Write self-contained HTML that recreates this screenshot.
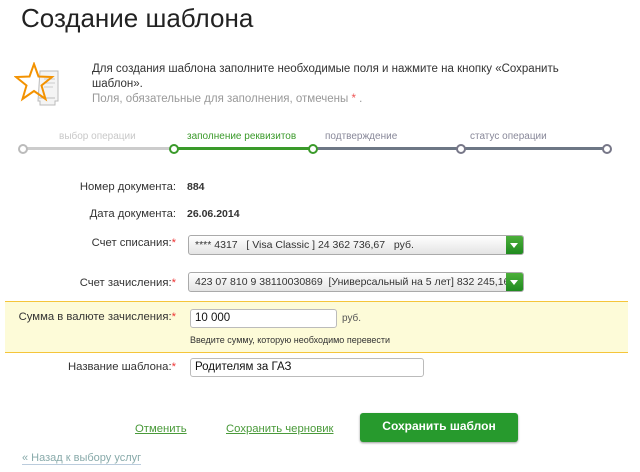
<!DOCTYPE html>
<html><head><meta charset="utf-8"><style>
body{margin:0;width:640px;height:472px;background:#fff;font-family:"Liberation Sans",sans-serif;position:relative;overflow:hidden;color:#333}
.a{position:absolute;white-space:nowrap}
.lbl{position:absolute;right:464px;font-size:11.3px;color:#333;white-space:nowrap}
.lbl i{color:#e33;font-style:normal}
.sel{position:absolute;left:188px;width:336px;height:20px;border:1px solid #aaa;border-radius:3px;background:linear-gradient(#fff,#e4e4e4);font-size:10.5px;line-height:19px;padding-left:6px;box-sizing:border-box;overflow:hidden;white-space:nowrap;color:#333}
.sel b{position:absolute;right:0;top:0;width:17px;height:18px;background:linear-gradient(#4caf3a,#1f8a1f)}
.sel b:after{content:"";position:absolute;left:4px;top:7px;border-left:4px solid transparent;border-right:4px solid transparent;border-top:5px solid #fff}
.inp{position:absolute;height:19px;border:1px solid #bbb;border-radius:3px;box-sizing:border-box;font-size:11.5px;line-height:17px;padding-left:4px;background:#fff;color:#111}
.dot{position:absolute;top:144px;width:6px;height:6px;border-radius:50%;border:2px solid #778;background:#fff}
</style></head><body>
<div class="a" style="left:21px;top:3px;font-size:26px;color:#222">Создание шаблона</div>
<svg class="a" style="left:14px;top:62px" width="48" height="44" viewBox="0 0 48 44">
<path d="M26 9h18v30h-3v4H26v-4h-2z" fill="#f4f4f4" stroke="#bbb"/>
<path d="M30 17h11M30 21h11M30 25h9" stroke="#ccc"/>
<path d="M25 36h16" stroke="#bbb"/>
<path d="M20 2l4.5 12.5 13.5 0.5-10.5 8.5 4 13.5-11.5-8-11.5 8 4-13.5-10.5-8.5 13.5-0.5z" fill="none" stroke="#f39200" stroke-width="2"/>
</svg>
<div class="a" style="left:92px;top:62px;font-size:11.5px;line-height:15px;color:#333;white-space:normal;width:500px">Для создания шаблона заполните необходимые поля и нажмите на кнопку «Сохранить шаблон».<br><span style="color:#999">Поля, обязательные для заполнения, отмечены <span style="color:#e55">*</span> .</span></div>
<div class="a" style="left:59px;top:131px;font-size:10px;color:#c8c8c8">выбор операции</div>
<div class="a" style="left:187px;top:131px;font-size:10px;color:#3a9a2a">заполнение реквизитов</div>
<div class="a" style="left:325px;top:131px;font-size:10px;color:#889">подтверждение</div>
<div class="a" style="left:470px;top:131px;font-size:10px;color:#889">статус операции</div>
<div class="a" style="left:22px;top:147px;width:152px;height:3px;background:#ccc"></div>
<div class="a" style="left:174px;top:147px;width:138px;height:3px;background:#3a9a2a"></div>
<div class="a" style="left:312px;top:147px;width:294px;height:3px;background:#6d7785"></div>
<div class="dot" style="left:18px;border-color:#bbb"></div>
<div class="dot" style="left:169px;border-color:#3a9a2a"></div>
<div class="dot" style="left:308px;border-color:#3a9a2a"></div>
<div class="dot" style="left:456px"></div>
<div class="dot" style="left:602px"></div>
<div class="lbl" style="top:181px">Номер документа:</div>
<div class="a" style="left:187px;top:181px;font-size:10.5px;font-weight:bold">884</div>
<div class="lbl" style="top:208px">Дата документа:</div>
<div class="a" style="left:187px;top:208px;font-size:10.5px;font-weight:bold">26.06.2014</div>
<div class="lbl" style="top:237px">Счет списания:<i>*</i></div>
<div class="sel" style="top:235px">**** 4317 &nbsp; [ Visa Classic ] 24 362 736,67 &nbsp; руб.<b></b></div>
<div class="lbl" style="top:277px">Счет зачисления:<i>*</i></div>
<div class="sel" style="top:272px">423 07 810 9 38110030869 &nbsp;[Универсальный на 5 лет] 832 245,16 &nbsp;руб.<b></b></div>
<div class="a" style="left:5px;top:301px;width:623px;height:50px;background:#fdfbd8;border-top:1px solid #f5c53a;border-bottom:1px solid #f5c53a"></div>
<div class="lbl" style="top:311px">Сумма в валюте зачисления:<i>*</i></div>
<div class="inp" style="left:190px;top:309px;width:147px">10 000</div>
<div class="a" style="left:342px;top:313px;font-size:10px;color:#555">руб.</div>
<div class="a" style="left:190px;top:335px;font-size:9px;color:#333">Введите сумму, которую необходимо перевести</div>
<div class="lbl" style="top:361px">Название шаблона:<i>*</i></div>
<div class="inp" style="left:190px;top:358px;width:234px">Родителям за ГАЗ</div>
<div class="a" style="left:135px;top:423px;font-size:11.3px;color:#4a9a3a;text-decoration:underline">Отменить</div>
<div class="a" style="left:226px;top:423px;font-size:11.3px;color:#4a9a3a;text-decoration:underline">Сохранить черновик</div>
<div class="a" style="left:360px;top:413px;width:158px;height:29px;border-radius:3px;background:#279a2d;box-shadow:0 1px 2px #999;color:#fff;font-size:12px;font-weight:bold;text-align:center;line-height:27px">Сохранить шаблон</div>
<div class="a" style="left:22px;top:452px;font-size:11px;color:#8aa;border-bottom:1px solid #bcd">« Назад к выбору услуг</div>
</body></html>
